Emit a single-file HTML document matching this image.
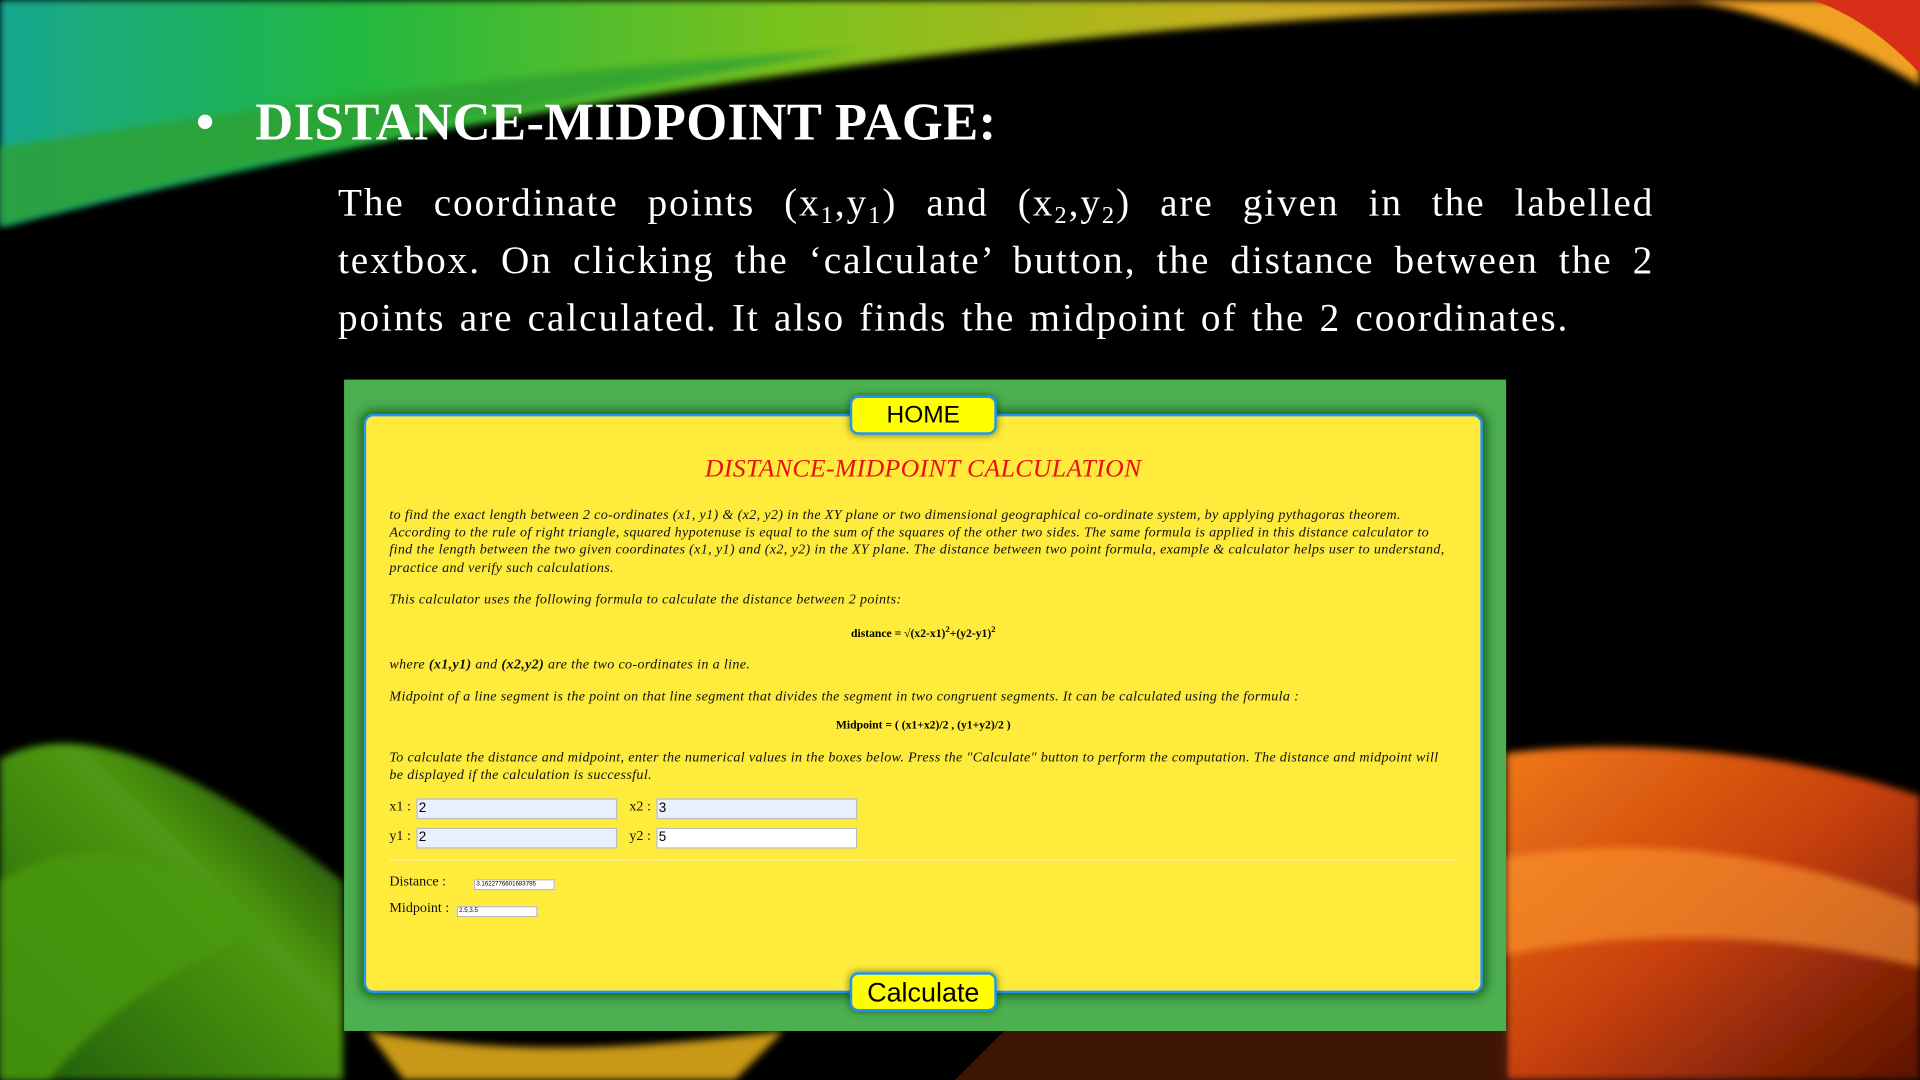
<!DOCTYPE html>
<html><head><meta charset="utf-8"><style>
html,body{margin:0;padding:0;background:#000;width:1920px;height:1080px;overflow:hidden}
#s{position:absolute;left:0;top:0;width:1568px;height:882px;transform:scale(1.22449);transform-origin:0 0;background:#000;font-family:"Liberation Serif",serif}
.a{position:absolute}
.t{left:160px;top:76px;color:#fff;font-size:43px;font-weight:bold;white-space:nowrap;letter-spacing:0.3px}
.p{left:276px;top:142px;width:1075px;color:#fff;font-size:32px;line-height:47px;text-align:justify;text-align-last:left;letter-spacing:1.6px;word-spacing:2px}
sub{font-size:20px;vertical-align:-6px;line-height:0}
.g{left:281px;top:310px;width:949px;height:532px;background:#4caf50}
.y{left:297px;top:338px;width:910px;height:469px;background:#ffeb3b;border:2px solid #2196f3;border-radius:8px;box-shadow:0 0 8px 3px rgba(0,60,0,.6)}
.b{left:694px;width:116px;background:#ffff00;border:2px solid #2196f3;border-radius:7px;font-family:"Liberation Sans",sans-serif;text-align:center;color:#000;box-shadow:0 0 6px rgba(0,50,0,.6)}
.in{color:#111;font-size:11.5px;font-style:italic;line-height:14.2px;letter-spacing:0.28px}
.f{position:absolute;background:#e8f0fe;border:1px solid #bbb;height:15px;font-family:"Liberation Sans",sans-serif;font-size:11px;line-height:15px;padding-left:1px;box-sizing:border-box}
.lb{position:absolute;font-size:11.5px;color:#111}
</style></head><body><div id="s">
<svg class="a" style="left:0;top:0" width="1568" height="882" viewBox="0 0 1568 882">
<defs>
<linearGradient id="tg" x1="0" y1="0" x2="1" y2="0"><stop offset="0" stop-color="#18a890"/><stop offset=".2" stop-color="#22b840"/><stop offset=".45" stop-color="#7cc21c"/><stop offset=".7" stop-color="#c8b020"/><stop offset="1" stop-color="#f08020"/></linearGradient>
<linearGradient id="bl" x1="0" y1="1" x2="1" y2="0"><stop offset="0" stop-color="#1e5a0a"/><stop offset=".6" stop-color="#4f9a12"/><stop offset="1" stop-color="#0e2a04"/></linearGradient>
<linearGradient id="br" x1="0" y1="0" x2="1" y2="1"><stop offset="0" stop-color="#f07818"/><stop offset=".5" stop-color="#c8400a"/><stop offset="1" stop-color="#5a1204"/></linearGradient>
<filter id="bb"><feGaussianBlur stdDeviation="3"/></filter>
</defs>
<path d="M0 0 H1450 C1300 5 1100 10 900 30 C600 60 300 110 0 185 Z" fill="url(#tg)" filter="url(#bb)"/>
<path d="M0 120 C200 90 400 60 700 40 C400 90 200 130 0 185Z" fill="#2da030" opacity=".8" filter="url(#bb)"/>
<path d="M1380 0 H1568 V70 C1520 40 1460 15 1380 0Z" fill="#f0a020" filter="url(#bb)"/>
<path d="M1480 0 H1568 V60 C1540 30 1510 10 1480 0Z" fill="#d83018"/>
<path d="M0 620 C70 580 180 640 280 720 L280 882 H0Z" fill="url(#bl)" filter="url(#bb)"/>
<path d="M0 720 C60 680 140 690 220 760 C160 780 90 820 40 882 H0Z" fill="#4a9a10" opacity=".8" filter="url(#bb)"/>
<path d="M1230 615 C1350 600 1480 620 1568 650 V882 H1230Z" fill="url(#br)" filter="url(#bb)"/>
<path d="M1230 700 C1350 680 1470 700 1568 740 V790 C1450 760 1330 760 1230 780Z" fill="#ff9a30" opacity=".6" filter="url(#bb)"/>
<path d="M300 842 C400 860 500 860 640 842 L600 882 H330Z" fill="#c89818" filter="url(#bb)"/>
<path d="M820 842 H1230 L1230 882 H780Z" fill="#5a2008" opacity=".7"/>
</svg>
<div class="a t">•&nbsp;&nbsp;&nbsp;DISTANCE-MIDPOINT PAGE:</div>
<div class="a p">The coordinate points (x<sub>1</sub>,y<sub>1</sub>) and (x<sub>2</sub>,y<sub>2</sub>) are given in the labelled textbox. On clicking the ‘calculate’ button, the distance between the 2 points are calculated. It also finds the midpoint of the 2 coordinates.</div>
<div class="a g"></div>
<div class="a y"></div>
<div class="a b" style="top:323px;height:28px;line-height:28px;font-size:20px">HOME</div>
<div class="a" style="left:297px;top:370px;width:914px;text-align:center;color:#e81010;font-style:italic;font-size:21px;letter-spacing:0.3px">DISTANCE-MIDPOINT CALCULATION</div>
<div class="a in" style="left:318px;top:414px;width:866px">to find the exact length between 2 co-ordinates (x1, y1) &amp; (x2, y2) in the XY plane or two dimensional geographical co-ordinate system, by applying pythagoras theorem. According to the rule of right triangle, squared hypotenuse is equal to the sum of the squares of the other two sides. The same formula is applied in this distance calculator to find the length between the two given coordinates (x1, y1) and (x2, y2) in the XY plane. The distance between two point formula, example &amp; calculator helps user to understand, practice and verify such calculations.</div>
<div class="a in" style="left:318px;top:483px">This calculator uses the following formula to calculate the distance between 2 points:</div>
<div class="a" style="left:297px;top:510px;width:914px;text-align:center;font-size:9.5px;font-weight:bold">distance = √(x2-x1)<sup style="font-size:7px">2</sup>+(y2-y1)<sup style="font-size:7px">2</sup></div>
<div class="a in" style="left:318px;top:536px">where <b>(x1,y1)</b> and <b>(x2,y2)</b> are the two co-ordinates in a line.</div>
<div class="a in" style="left:318px;top:562px">Midpoint of a line segment is the point on that line segment that divides the segment in two congruent segments. It can be calculated using the formula :</div>
<div class="a" style="left:297px;top:588px;width:914px;text-align:center;font-size:9.5px;font-weight:bold">Midpoint = ( (x1+x2)/2 , (y1+y2)/2 )</div>
<div class="a in" style="left:318px;top:612px;width:866px">To calculate the distance and midpoint, enter the numerical values in the boxes below. Press the "Calculate" button to perform the computation. The distance and midpoint will be displayed if the calculation is successful.</div>
<div class="lb" style="left:318px;top:653px">x1 :</div><div class="f" style="left:340px;top:652px;width:164px;height:17px">2</div>
<div class="lb" style="left:514px;top:653px">x2 :</div><div class="f" style="left:536px;top:652px;width:164px;height:17px">3</div>
<div class="lb" style="left:318px;top:677px">y1 :</div><div class="f" style="left:340px;top:676px;width:164px;height:17px">2</div>
<div class="lb" style="left:514px;top:677px">y2 :</div><div class="f" style="left:536px;top:676px;width:164px;height:17px;background:#fff">5</div>
<div class="a" style="left:318px;top:702px;width:872px;height:1px;background:#fff3a0"></div>
<div class="lb" style="left:318px;top:714px">Distance :</div><div class="f" style="left:387px;top:718px;width:66px;height:9px;background:#fff;font-size:5px;line-height:7px">3.1622776601683795</div>
<div class="lb" style="left:318px;top:736px">Midpoint :</div><div class="f" style="left:373px;top:740px;width:66px;height:9px;background:#fff;font-size:5px;line-height:7px">2.5,3.5</div>
<div class="a b" style="top:794px;height:28px;line-height:30px;font-size:22px">Calculate</div>
</div></body></html>
